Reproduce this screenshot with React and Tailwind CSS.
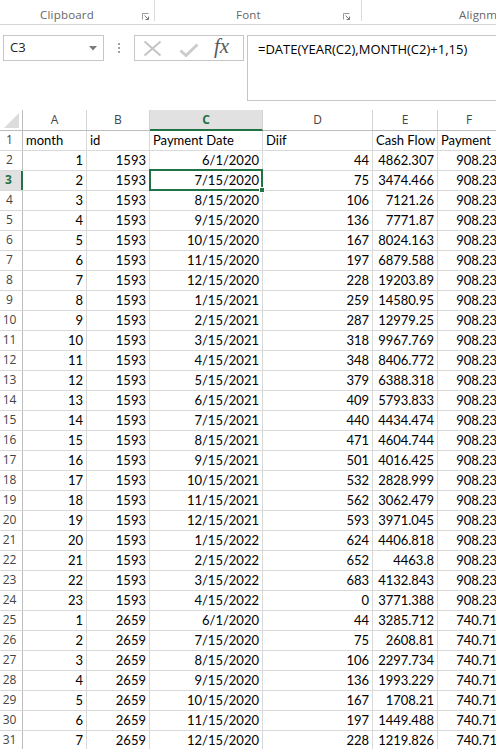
import React from "react";

const dates1 = ["6/1/2020","7/15/2020","8/15/2020","9/15/2020","10/15/2020","11/15/2020","12/15/2020","1/15/2021","2/15/2021","3/15/2021","4/15/2021","5/15/2021","6/15/2021","7/15/2021","8/15/2021","9/15/2021","10/15/2021","11/15/2021","12/15/2021","1/15/2022","2/15/2022","3/15/2022","4/15/2022"];
const diff1 = [44,75,106,136,167,197,228,259,287,318,348,379,409,440,471,501,532,562,593,624,652,683,0];
const cf1 = ["4862.307","3474.466","7121.26","7771.87","8024.163","6879.588","19203.89","14580.95","12979.25","9967.769","8406.772","6388.318","5793.833","4434.474","4604.744","4016.425","2828.999","3062.479","3971.045","4406.818","4463.8","4132.843","3771.388"];
const cf2 = ["3285.712","2608.81","2297.734","1993.229","1708.21","1449.488","1219.826"];

const data = [];
for (let i = 0; i < 23; i++) data.push([String(i + 1), "1593", dates1[i], String(diff1[i]), cf1[i], "908.23"]);
for (let i = 0; i < 7; i++) data.push([String(i + 1), "2659", dates1[i], String(diff1[i]), cf2[i], "740.71"]);

const colW = ["w-[64px]", "w-[63px]", "w-[113px]", "w-[110px]", "w-[65px]", "w-[63px]"];
const letters = ["A", "B", "C", "D", "E", "F"];

function Launcher() {
  return (
    <svg width="8" height="8" viewBox="0 0 8 8" className="shrink-0">
      <path d="M0.5 6.5V0.5H6.5" fill="none" stroke="#9a9a9a" strokeWidth="1" />
      <path d="M2.5 2.5L6.5 6.5M3.5 6.5H6.5V3.5" fill="none" stroke="#7a7a7a" strokeWidth="1" />
    </svg>
  );
}

function Ribbon() {
  return (
    <div className="h-[25px] border-b border-[#d5d5d5] flex text-[11.5px] text-[#666] font-['Open_Sans',sans-serif] tracking-[0.2px]">
      <div className="w-[155px] flex items-start border-r border-[#dadada] h-[21px] relative">
        <div className="w-[134px] text-center pt-[8px] leading-[14px]">Clipboard</div>
        <div className="pt-[13px] pl-[8px]"><Launcher /></div>
      </div>
      <div className="w-[207px] flex items-start border-r border-[#dadada] h-[21px]">
        <div className="w-[187px] text-center pt-[8px] leading-[14px]">Font</div>
        <div className="pt-[13px] pl-[1px]"><Launcher /></div>
      </div>
      <div className="flex-1 pt-[8px] pl-[97px] leading-[14px] whitespace-nowrap overflow-hidden">Alignment</div>
    </div>
  );
}

function FormulaBar() {
  return (
    <div className="h-[85px] flex items-start pt-[10px] font-['Open_Sans',sans-serif]">
      <div className="ml-[3px] w-[101px] h-[26px] border border-[#c6c6c6] flex items-center justify-between pl-[6px] pr-[6px]">
        <span className="text-[13px] text-[#222]">C3</span>
        <svg width="8" height="5" viewBox="0 0 8 5"><path d="M0 0H8L4 4.5Z" fill="#7a7a7a" /></svg>
      </div>
      <div className="w-[30px] h-[26px] flex flex-col items-center justify-center gap-[2px]">
        <span className="w-[2px] h-[2px] bg-[#a0a0a0]" />
        <span className="w-[2px] h-[2px] bg-[#a0a0a0]" />
        <span className="w-[2px] h-[2px] bg-[#a0a0a0]" />
      </div>
      <div className="w-[110px] h-[26px] border border-[#c6c6c6] flex items-center">
        <svg width="19" height="17" viewBox="0 0 19 17" className="ml-[8px]">
          <path d="M1.5 1.5L17.5 15.5M17.5 1.5L1.5 15.5" stroke="#c4c4c4" strokeWidth="2" fill="none" />
        </svg>
        <svg width="20" height="14" viewBox="0 0 20 14" className="ml-[17px] mt-[4px]">
          <path d="M1.5 7.5L7 12.5L18.5 1.5" stroke="#cccccc" strokeWidth="3" fill="none" />
        </svg>
        <span className="ml-[15px] font-['Liberation_Serif',serif] italic text-[21px] leading-none text-[#5a5a5a] -mt-[3px]">fx</span>
      </div>
      <div className="ml-[3px] flex-1 h-[66px] border border-r-0 border-[#c6c6c6] pl-[10px] pt-[4px] text-[13px] text-black leading-[18px] whitespace-nowrap overflow-hidden">
        =DATE(YEAR(C2),MONTH(C2)+1,15)
      </div>
    </div>
  );
}

function HeaderRow() {
  return (
    <div className="flex h-[21px] border-b border-[#bcbcbc] font-['Open_Sans',sans-serif] text-[12px] text-[#444]">
      <div className="w-[23px] shrink-0 border-r border-[#bcbcbc] flex items-end justify-end pr-[3px] pb-[2px]">
        <svg width="15" height="15" viewBox="0 0 15 15"><path d="M15 0V15H0Z" fill="#dcdcdc" /></svg>
      </div>
      {letters.map((l, i) =>
        i === 2 ? (
          <div key={l} className={`${colW[i]} shrink-0 border-r border-[#d4d4d4] bg-[#e1e1e1] flex items-center justify-center font-bold text-[#217346] -mb-px border-b-2 border-b-[#217346]`}>
            {l}
          </div>
        ) : (
          <div key={l} className={`${colW[i]} shrink-0 border-r border-[#d4d4d4] flex items-center justify-center`}>
            {l}
          </div>
        )
      )}
    </div>
  );
}

function DataRow({ n, cells, header }) {
  const sel = n === 3;
  return (
    <div className="flex h-[20px] border-b border-[#d9d9d9]">
      <div
        className={
          sel
            ? "w-[23px] shrink-0 bg-[#e1e1e1] border-r-2 border-[#217346] flex items-end justify-center pr-[4px] pb-[1px] font-['Open_Sans',sans-serif] text-[12px] font-bold text-[#217346]"
            : "w-[23px] shrink-0 border-r border-[#bcbcbc] flex items-end justify-center pr-[3px] pb-[1px] font-['Open_Sans',sans-serif] text-[12px] text-[#444]"
        }
      >
        {n}
      </div>
      {cells.map((c, i) => (
        <div
          key={i}
          className={`${colW[i]} shrink-0 border-r border-[#d9d9d9] flex items-end ${header ? "justify-start pl-[3px]" : "justify-end pr-[3px]"} pb-[1px] whitespace-nowrap overflow-hidden text-[13px] leading-[17px] text-black`}
        >
          {c}
        </div>
      ))}
    </div>
  );
}

export default function App() {
  return (
    <div className="w-[496px] h-[749px] overflow-hidden bg-white">
      <Ribbon />
      <FormulaBar />
      <div className="relative w-[520px] font-['Lato',sans-serif]">
        <HeaderRow />
        <DataRow n={1} cells={["month", "id", "Payment Date", "Diif", "Cash Flow", "Payment"]} header />
        {data.map((r, i) => (
          <DataRow key={i} n={i + 2} cells={r} />
        ))}
        <div className="absolute left-[149px] top-[59px] w-[114px] h-[22px] border-2 border-[#217346] pointer-events-none">
          <div className="absolute -right-[4px] -bottom-[4px] w-[6px] h-[6px] bg-[#217346] border border-white" />
        </div>
      </div>
    </div>
  );
}
